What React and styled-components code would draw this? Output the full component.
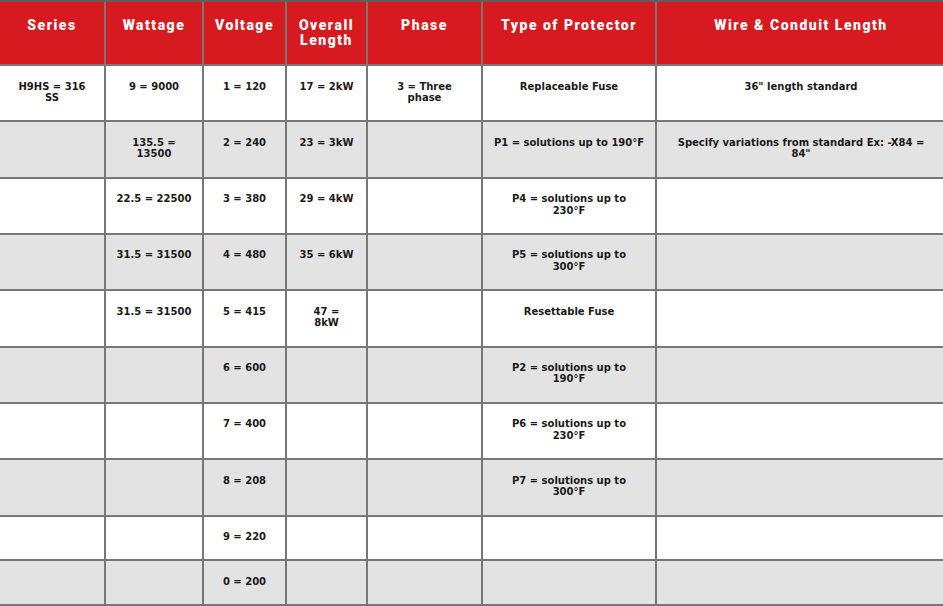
import React from "react";
import styled, { createGlobalStyle } from "styled-components";

const Global = createGlobalStyle`
  html, body { margin: 0; padding: 0; background: #ffffff; overflow: hidden; }
  body { width: 943px; height: 606px; }
`;

const Frame = styled.div`
  border-top: 2px solid #5e5e5e;
  width: 943px;
  overflow: hidden;
`;

const Grid = styled.div`
  display: grid;
  grid-template-columns: 104px 96px 81px 79px 113px 172px 288px;
  gap: 2px;
  background: #777777;
  padding-bottom: 2px;
  width: max-content;
`;

const Row = styled.div`
  display: contents;
`;

const HeadCell = styled.div`
  background: #d71a20;
  color: #ffffff;
  font-family: Roboto, "Liberation Sans", sans-serif;
  font-weight: 900;
  font-size: 14px;
  letter-spacing: 1.5px;
  line-height: 15px;
  text-align: center;
  padding: 16px 4px;
  white-space: pre-line;
`;

const Cell = styled.div`
  background: ${(p) => (p.$shade ? "#e3e3e3" : "#ffffff")};
  color: #1a1a1a;
  font-family: "DejaVu Sans", sans-serif;
  font-weight: 700;
  font-size: 10px;
  line-height: 11.4px;
  text-align: center;
  padding: 14.5px 4px 17px;
  white-space: pre-line;
`;

const headers = [
  "Series",
  "Wattage",
  "Voltage",
  "Overall\nLength",
  "Phase",
  "Type of Protector",
  "Wire & Conduit Length",
];

const rows = [
  ["H9HS = 316\nSS", "9 = 9000", "1 = 120", "17 = 2kW", "3 = Three\nphase", "Replaceable Fuse", "36\" length standard"],
  ["", "135.5 =\n13500", "2 = 240", "23 = 3kW", "", "P1 = solutions up to 190°F", "Specify variations from standard Ex: -X84 =\n84\""],
  ["", "22.5 = 22500", "3 = 380", "29 = 4kW", "", "P4 = solutions up to\n230°F", ""],
  ["", "31.5 = 31500", "4 = 480", "35 = 6kW", "", "P5 = solutions up to\n300°F", ""],
  ["", "31.5 = 31500", "5 = 415", "47 =\n8kW", "", "Resettable Fuse", ""],
  ["", "", "6 = 600", "", "", "P2 = solutions up to\n190°F", ""],
  ["", "", "7 = 400", "", "", "P6 = solutions up to\n230°F", ""],
  ["", "", "8 = 208", "", "", "P7 = solutions up to\n300°F", ""],
  ["", "", "9 = 220", "", "", "", ""],
  ["", "", "0 = 200", "", "", "", ""],
];

export default function App() {
  return (
    <>
      <Global />
      <Frame>
        <Grid>
          <Row>
            {headers.map((h) => (
              <HeadCell key={h}>{h}</HeadCell>
            ))}
          </Row>
          {rows.map((r, i) => (
            <Row key={i}>
              {r.map((c, j) => (
                <Cell key={j} $shade={i % 2 === 1}>
                  {c}
                </Cell>
              ))}
            </Row>
          ))}
        </Grid>
      </Frame>
    </>
  );
}
